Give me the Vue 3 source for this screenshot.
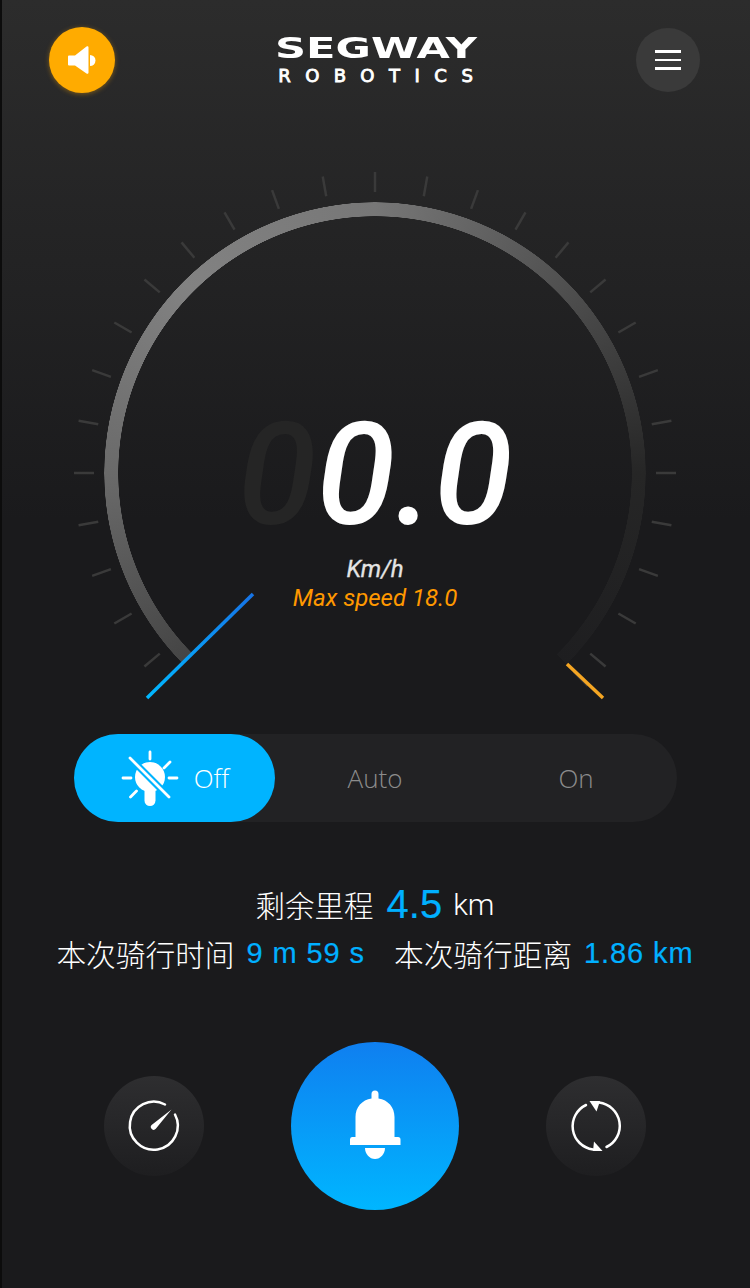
<script setup>
import { ref } from 'vue'

const lightMode = ref('Off')
const modes = ['Off', 'Auto', 'On']

// gauge ticks, one every 10 degrees, -135 to 135 from the top
const cx = 375
const cy = 343
const ticks = []
for (let a = -130; a <= 130; a += 10) {
  ticks.push(a)
}
ticks.push(135)

const tickLine = (deg) => {
  const rad = ((deg - 90) * Math.PI) / 180
  return {
    x1: cx + 281 * Math.cos(rad),
    y1: cy + 281 * Math.sin(rad),
    x2: cx + 301 * Math.cos(rad),
    y2: cy + 301 * Math.sin(rad),
  }
}
</script>

<template>
  <div class="page">
    <header class="top-bar">
      <button class="round sound">
        <svg width="66" height="66" viewBox="0 0 66 66">
          <path d="M19 29.500a1 1 0 0 1 1-1h6L37.500 19.500a1.200 1.200 0 0 1 2 1V45.500a1.200 1.200 0 0 1-2 1L26 38.500h-6a1 1 0 0 1-1-1z" fill="#fff" />
          <path d="M41 28a5.500 5.500 0 0 1 0 11z" fill="#fff" />
        </svg>
      </button>
      <div class="logo">
        <div class="logo-main">SEGWAY</div>
        <div class="logo-sub">ROBOTICS</div>
      </div>
      <button class="round menu">
        <span></span><span></span><span></span>
      </button>
    </header>

    <section class="gauge">
      <div class="ring"></div>
      <svg class="gauge-lines" width="750" height="590" viewBox="0 0 750 590">
        <defs>
          <linearGradient id="needle" gradientUnits="userSpaceOnUse" x1="147" y1="568" x2="253" y2="464">
            <stop offset="0" stop-color="#00b8ff" />
            <stop offset="1" stop-color="#1673e6" />
          </linearGradient>
        </defs>
        <line
          v-for="t in ticks"
          :key="t"
          v-bind="tickLine(t)"
          stroke="#3a3a3a"
          stroke-width="2.500"
        />
        <line x1="147" y1="568" x2="253" y2="464" stroke="url(#needle)" stroke-width="3.500" />
        <line x1="567" y1="534" x2="603" y2="568" stroke="#f5a623" stroke-width="3.500" />
      </svg>
      <div class="readout">
        <div class="speed"><span class="dim">0</span>0.0</div>
        <div class="unit">Km/h</div>
        <div class="max">Max speed 18.0</div>
      </div>
    </section>

    <div class="switch">
      <div
        v-for="m in modes"
        :key="m"
        class="mode"
        :class="{ on: lightMode === m }"
      >
        <svg v-if="m === 'Off'" class="bulb" width="58" height="60" viewBox="0 0 58 60">
          <g stroke="#fff" stroke-width="2.800" stroke-linecap="round" fill="none">
            <path d="M29 4v7M2 30h8M48 30h8M49 14l-6 6M9.500 49l6-6" />
          </g>
          <circle cx="29" cy="29" r="15" fill="#fff" />
          <rect x="23.500" y="37" width="11" height="21" rx="5.500" fill="#fff" />
          <line x1="9" y1="10" x2="48" y2="49" stroke="#00b4ff" stroke-width="7" />
          <line x1="9" y1="10" x2="48" y2="49" stroke="#fff" stroke-width="2.800" stroke-linecap="round" />
        </svg>
        <span>{{ m }}</span>
      </div>
    </div>

    <div class="info">
      <div class="info-row first">
        <span>剩余里程</span>
        <b class="big">4.5</b>
        <span class="km">km</span>
      </div>
      <div class="info-row second">
        <span>本次骑行时间</span>
        <b>9 m 59 s</b>
        <span class="gap">本次骑行距离</span>
        <b>1.86 km</b>
      </div>
    </div>

    <div class="actions">
      <button class="round side">
        <svg width="60" height="60" viewBox="-30 -30 60 60">
          <path d="M11 -21.500A24 24 0 1 0 21 -11.500" fill="none" stroke="#fff" stroke-width="2.500" stroke-linecap="round" />
          <path d="M17.500 -16.500L1.800 2.800a2.800 2.800 0 0 1-4.200-3.800z" fill="#fff" />
        </svg>
      </button>
      <button class="bell-btn">
        <svg width="60" height="76" viewBox="0 0 60 76">
          <g transform="translate(0 2)" fill="#fff">
            <path d="M26.500 4a3.500 3.500 0 0 1 7 0V8.500C43 10 49.500 17 49.500 27V47h-39V27C10.500 17 17 10 26.500 8.500z" />
            <path d="M7 47H53a2.500 2.500 0 0 1 2.500 2.500V55H5V49.500A2.500 2.500 0 0 1 7 47z" />
            <path d="M20 58H40C40 64 35.500 69 30 69S20 64 20 58z" />
          </g>
        </svg>
      </button>
      <button class="round side">
        <svg width="60" height="60" viewBox="-30 -30 60 60">
          <g fill="none" stroke="#fff" stroke-width="2.500" stroke-linecap="round">
            <path d="M-10 -21A23.500 23.500 0 0 0 -3 23.500" />
            <path d="M3 -23.500A23.500 23.500 0 0 1 10.500 21" />
          </g>
          <path d="M-6.500 -25H4L0.500 -14.500z" fill="#fff" />
          <path d="M-2 15.500L6.500 25H-3z" fill="#fff" />
        </svg>
      </button>
    </div>
  </div>
</template>

<style>
html,
body {
  margin: 0;
  background: #1a1a1c;
}
</style>

<style scoped>
.page {
  width: 750px;
  height: 1288px;
  box-sizing: border-box;
  overflow: hidden;
  border-left: 2px solid #0c0c0c;
  margin: 0;
  background: linear-gradient(180deg, #2c2c2c 0, #1a1a1c 520px);
  font-family: Roboto, "Noto Sans CJK SC", sans-serif;
  color: #fff;
  display: flex;
  flex-direction: column;
  align-items: center;
}

button {
  border: 0;
  padding: 0;
  display: flex;
  align-items: center;
  justify-content: center;
}

.round {
  border-radius: 50%;
}

.top-bar {
  width: 750px;
  margin-left: -2px;
  height: 130px;
  flex-shrink: 0;
  box-sizing: border-box;
  padding: 27px 50px 0 49px;
  display: flex;
  justify-content: space-between;
  align-items: flex-start;
}

.sound {
  width: 66px;
  height: 66px;
  background: #ffab00;
  box-shadow: 0 1px 5px rgba(255, 171, 0, 0.4);
}

.menu {
  width: 64px;
  height: 64px;
  margin-top: 1px;
  background: #3a3a3a;
  flex-direction: column;
  gap: 6px;
}

.menu span {
  display: block;
  width: 26px;
  height: 2.500px;
  background: #fff;
}

.logo {
  width: 200px;
  margin-top: 8px;
  font-family: "DejaVu Sans", sans-serif;
  text-align: center;
  line-height: 1;
}

.logo-main {
  font-size: 28px;
  font-weight: 700;
  height: 27px;
  line-height: 27px;
  white-space: nowrap;
  transform: scaleX(1.54);
}

.logo-sub {
  font-size: 18px;
  font-weight: 400;
  -webkit-text-stroke: 0.9px #fff;
  margin-top: 5px;
  letter-spacing: 14.500px;
  margin-right: -14.500px;
  white-space: nowrap;
}

.gauge {
  position: relative;
  width: 750px;
  margin-left: -2px;
  height: 604px;
  flex-shrink: 0;
}

.ring {
  position: absolute;
  left: 104px;
  top: 72px;
  width: 542px;
  height: 542px;
  border-radius: 50%;
  background: conic-gradient(
    #777 0deg,
    #505050 45deg,
    #262626 90deg,
    #1e1e20 135deg,
    transparent 135deg,
    transparent 225deg,
    #444 225deg,
    #6a6a6a 270deg,
    #828282 315deg,
    #777 360deg
  );
  -webkit-mask: radial-gradient(closest-side, transparent 256.500px, #000 257px, #000 270.500px, transparent 271px);
  mask: radial-gradient(closest-side, transparent 256.500px, #000 257px, #000 270.500px, transparent 271px);
}

.gauge-lines {
  position: absolute;
  left: 0;
  top: 0;
}

.readout {
  position: absolute;
  left: 0;
  right: 0;
  top: 266px;
  display: flex;
  flex-direction: column;
  align-items: center;
  font-style: italic;
}

.speed {
  font-size: 143px;
  font-weight: 500;
  line-height: 158px;
  height: 158px;
  white-space: nowrap;
}

.dim {
  color: #252525;
}

.unit {
  font-size: 24px;
  font-weight: 400;
  -webkit-text-stroke: 0.3px #e4e4e4;
  line-height: 28px;
  margin-top: 1px;
  color: #e4e4e4;
}

.max {
  font-size: 24px;
  line-height: 30px;
  color: #ff9800;
}

.switch {
  width: 603px;
  height: 88px;
  flex-shrink: 0;
  border-radius: 44px;
  background: #222224;
  display: flex;
  margin-left: -2px;
}

.mode {
  flex: 1;
  border-radius: 44px;
  display: flex;
  align-items: center;
  justify-content: center;
  gap: 15px;
  font-family: "Open Sans", sans-serif;
  font-weight: 300;
  font-size: 26px;
  color: #8c8c8c;
}

.mode.on {
  background: #00b4ff;
  color: #fff;
}

.bulb {
  margin-left: 2px;
}

.info {
  margin-top: 58px;
  margin-left: -2px;
  display: flex;
  flex-direction: column;
  align-items: center;
  font-family: "Noto Sans CJK SC", sans-serif;
  font-weight: 300;
  font-size: 29.700px;
}

.info-row {
  display: flex;
  align-items: center;
  white-space: nowrap;
}

.info-row.first {
  height: 48px;
  font-size: 29.500px;
}

.info-row.second {
  height: 50px;
  margin-bottom: 2px;
}

.info-row b {
  font-family: "Liberation Sans", sans-serif;
  font-weight: 400;
  font-size: 29px;
  letter-spacing: 0.9px;
  -webkit-text-stroke: 0.2px #00b0ff;
  color: #00b0ff;
  margin-left: 12px;
}

.info-row b.big {
  font-size: 40px;
  letter-spacing: 0;
  margin-left: 13px;
}

.km {
  font-family: Roboto, sans-serif;
  font-size: 30px;
  margin-left: 11px;
}

.gap {
  margin-left: 29px;
}

.actions {
  margin-top: 62px;
  margin-left: -2px;
  width: 542px;
  display: flex;
  align-items: center;
  justify-content: space-between;
}

.side {
  width: 100px;
  height: 100px;
  background: linear-gradient(180deg, #2e2e30, #1e1e20);
}

.bell-btn {
  width: 168px;
  height: 168px;
  border-radius: 50%;
  background: linear-gradient(180deg, #0f7ff0, #00b6ff);
}
</style>
